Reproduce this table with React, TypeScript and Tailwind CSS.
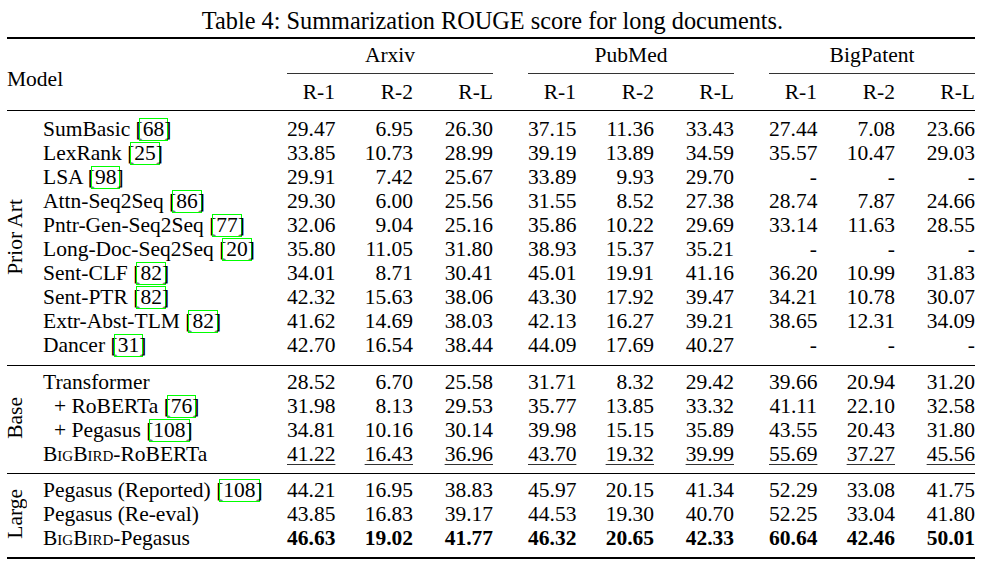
type Row = { name: React.ReactNode; vals: string; style?: "bold" | "under" };

const Cite = ({ n }: { n: string }) => (
  <>
    {" "}[
    <span className="-mx-[4px] inline-block border border-[#00ff00] px-[3px] leading-[21px]">{n}</span>]
  </>
);

const BigBird = () => <span className="[font-variant-caps:small-caps]">BigBird</span>;

const priorArt: Row[] = [
  { name: <>SumBasic<Cite n="68" /></>, vals: "29.47 6.95 26.30 37.15 11.36 33.43 27.44 7.08 23.66" },
  { name: <>LexRank<Cite n="25" /></>, vals: "33.85 10.73 28.99 39.19 13.89 34.59 35.57 10.47 29.03" },
  { name: <>LSA<Cite n="98" /></>, vals: "29.91 7.42 25.67 33.89 9.93 29.70 - - -" },
  { name: <>Attn-Seq2Seq<Cite n="86" /></>, vals: "29.30 6.00 25.56 31.55 8.52 27.38 28.74 7.87 24.66" },
  { name: <>Pntr-Gen-Seq2Seq<Cite n="77" /></>, vals: "32.06 9.04 25.16 35.86 10.22 29.69 33.14 11.63 28.55" },
  { name: <>Long-Doc-Seq2Seq<Cite n="20" /></>, vals: "35.80 11.05 31.80 38.93 15.37 35.21 - - -" },
  { name: <>Sent-CLF<Cite n="82" /></>, vals: "34.01 8.71 30.41 45.01 19.91 41.16 36.20 10.99 31.83" },
  { name: <>Sent-PTR<Cite n="82" /></>, vals: "42.32 15.63 38.06 43.30 17.92 39.47 34.21 10.78 30.07" },
  { name: <>Extr-Abst-TLM<Cite n="82" /></>, vals: "41.62 14.69 38.03 42.13 16.27 39.21 38.65 12.31 34.09" },
  { name: <>Dancer<Cite n="31" /></>, vals: "42.70 16.54 38.44 44.09 17.69 40.27 - - -" },
];

const base: Row[] = [
  { name: "Transformer", vals: "28.52 6.70 25.58 31.71 8.32 29.42 39.66 20.94 31.20" },
  { name: <span className="pl-[11px]">+ RoBERTa<Cite n="76" /></span>, vals: "31.98 8.13 29.53 35.77 13.85 33.32 41.11 22.10 32.58" },
  { name: <span className="pl-[11px]">+ Pegasus<Cite n="108" /></span>, vals: "34.81 10.16 30.14 39.98 15.15 35.89 43.55 20.43 31.80" },
  { name: <><BigBird />-RoBERTa</>, vals: "41.22 16.43 36.96 43.70 19.32 39.99 55.69 37.27 45.56", style: "under" },
];

const large: Row[] = [
  { name: <>Pegasus (Reported)<Cite n="108" /></>, vals: "44.21 16.95 38.83 45.97 20.15 41.34 52.29 33.08 41.75" },
  { name: "Pegasus (Re-eval)", vals: "43.85 16.83 39.17 44.53 19.30 40.70 52.25 33.04 41.80" },
  { name: <><BigBird />-Pegasus</>, vals: "46.63 19.02 41.77 46.32 20.65 42.33 60.64 42.46 50.01", style: "bold" },
];

const groups = ["Arxiv", "PubMed", "BigPatent"];

function Cells({ vals, style }: { vals: string[]; style?: Row["style"] }) {
  return (
    <div className="grid grid-cols-[48px_78px_80px] text-right">
      {vals.map((v, i) => (
        <div key={i}>
          <span
            className={
              style === "under"
                ? "underline decoration-[#333] decoration-1 underline-offset-[3px]"
                : style === "bold"
                  ? "font-bold"
                  : ""
            }
          >
            {v}
          </span>
        </div>
      ))}
    </div>
  );
}

function Section({ label, rows, className }: { label: string; rows: Row[]; className: string }) {
  return (
    <div className={`flex ${className}`}>
      <div className="flex w-[36px] items-center">
        <span className="rotate-180 whitespace-nowrap leading-[16px] [writing-mode:vertical-rl]">{label}</span>
      </div>
      <div className="flex flex-col">
        {rows.map((r, i) => {
          const v = r.vals.split(" ");
          return (
            <div key={i} className="flex h-[24px]">
              <div className="w-[244px] whitespace-nowrap">{r.name}</div>
              <div className="flex gap-[35px]">
                <div className="w-[206px]">
                  <Cells vals={v.slice(0, 3)} style={r.style} />
                </div>
                <div className="w-[206px]">
                  <Cells vals={v.slice(3, 6)} style={r.style} />
                </div>
                <div className="w-[206px]">
                  <Cells vals={v.slice(6, 9)} style={r.style} />
                </div>
              </div>
            </div>
          );
        })}
      </div>
    </div>
  );
}

export default function App() {
  return (
    <div className="h-[564px] w-[985px] bg-white text-black [font-family:'Liberation_Serif',serif]">
      <p className="pt-[7px] text-center text-[24.3px] leading-[28px]">
        Table 4: Summarization ROUGE score for long documents.
      </p>
      <div className="ml-[7px] mt-[2px] w-[968px] text-[21.5px] leading-[24px]">
        <div className="flex border-t-2 border-b border-black pt-[4px] pb-[6px]">
          <div className="w-[280px] pt-[24px]">Model</div>
          <div className="flex gap-[35px]">
            {groups.map((g) => (
              <div key={g} className="w-[206px]">
                <div className="h-[24px] text-center">{g}</div>
                <div className="mt-[6px] border-t border-[#333]" />
                <div className="mt-[6px]">
                  <Cells vals={["R-1", "R-2", "R-L"]} />
                </div>
              </div>
            ))}
          </div>
        </div>
        <Section label="Prior Art" rows={priorArt} className="border-b border-black pt-[6px] pb-[8px]" />
        <Section label="Base" rows={base} className="border-b border-black pt-[4px] pb-[7px]" />
        <Section label="Large" rows={large} className="border-b-2 border-black pt-[4px] pb-[7px]" />
      </div>
    </div>
  );
}
